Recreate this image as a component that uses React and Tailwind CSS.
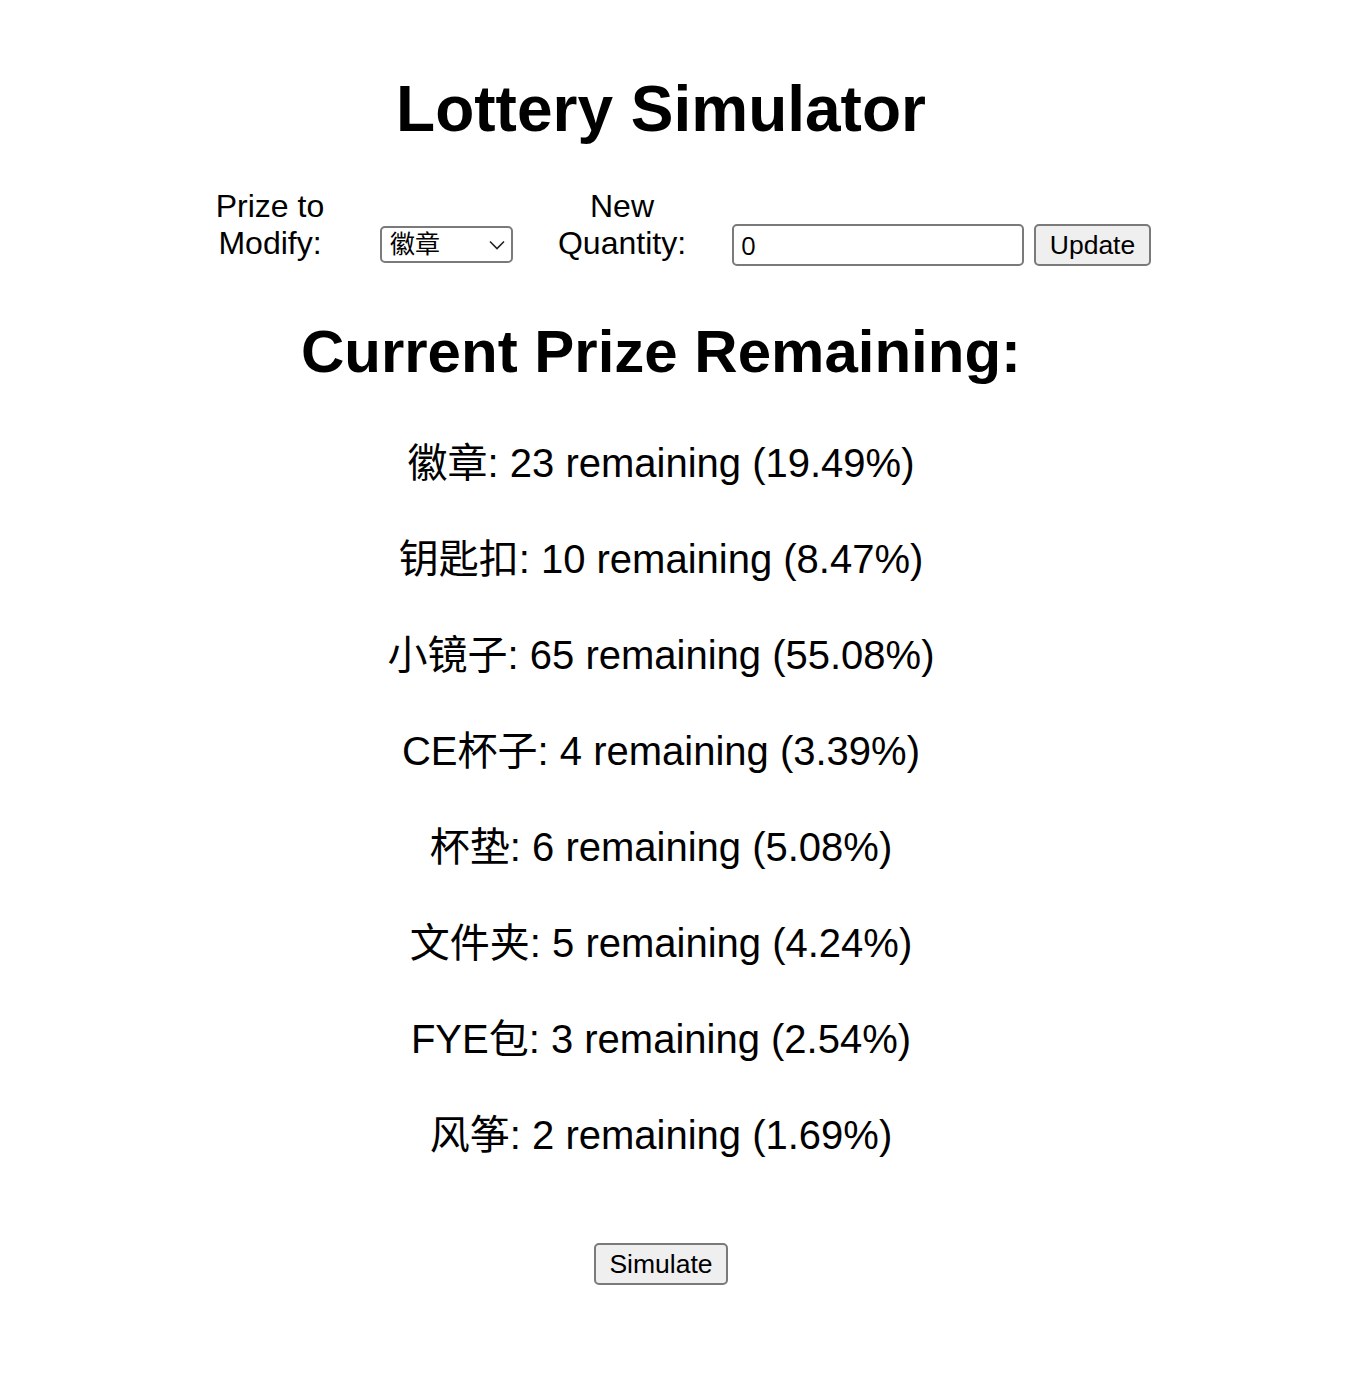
import React, { useState } from "react";

const prizes = [
  ["徽章", 23, "19.49"],
  ["钥匙扣", 10, "8.47"],
  ["小镜子", 65, "55.08"],
  ["CE杯子", 4, "3.39"],
  ["杯垫", 6, "5.08"],
  ["文件夹", 5, "4.24"],
  ["FYE包", 3, "2.54"],
  ["风筝", 2, "1.69"],
];

const font = "font-['Liberation_Sans','Noto_Sans_CJK_SC',sans-serif]";

export default function App() {
  const [sel, setSel] = useState("徽章");
  const [qty, setQty] = useState("0");
  return (
    <div className={`${font} text-black bg-white min-h-[1380px] w-[1362px]`}>
      <div className="w-[1290px] ml-[16px] flex flex-col items-center">
        <h1 className="mt-[72px] text-[64px] leading-[74px] font-bold">Lottery Simulator</h1>
      </div>

      <div className="mt-[42px] pl-[200px] flex items-start">
        <label className="w-[140px] text-center text-[32px] leading-[37px]">
          Prize to
          <br />
          Modify:
        </label>
        <div className="relative ml-[40px] mt-[38px]">
          <select
            value={sel}
            onChange={(e) => setSel(e.target.value)}
            className={`${font} appearance-none w-[133px] h-[37px] border-2 border-[#7a7a7a] rounded-[5px] bg-white pl-[8px] text-[25px] leading-[33px]`}
          >
            {prizes.map((p) => (
              <option key={p[0]} value={p[0]}>
                {p[0]}
              </option>
            ))}
          </select>
          <svg
            className="pointer-events-none absolute right-[8px] top-[14px]"
            width="16"
            height="10"
            viewBox="0 0 16 10"
            fill="none"
            stroke="#222"
            strokeWidth="1.6"
          >
            <path d="M1 1.5 L8 8.5 L15 1.5" />
          </svg>
        </div>
        <label className="ml-[39px] w-[140px] text-center text-[32px] leading-[37px]">
          New
          <br />
          Quantity:
        </label>
        <input
          value={qty}
          onChange={(e) => setQty(e.target.value)}
          className="ml-[40px] mt-[36px] w-[292px] h-[42px] border-2 border-[#7a7a7a] rounded-[5px] bg-white pl-[7px] text-[26px] font-['Open_Sans',sans-serif] outline-none"
        />
        <button className="ml-[10px] mt-[36px] w-[117px] h-[42px] border-2 border-[#7a7a7a] rounded-[5px] bg-[#efefef] text-[26.5px] leading-[38px]">
          Update
        </button>
      </div>

      <div className="w-[1290px] ml-[16px] flex flex-col items-center">
        <h2 className="mt-[51px] text-[60px] leading-[69px] font-bold">Current Prize Remaining:</h2>
        <div className="mt-[49px] flex flex-col items-center gap-[40px]">
          {prizes.map((p) => (
            <p key={p[0]} className="text-[40px] leading-[56px] whitespace-nowrap">
              {p[0]}: {p[1]} remaining ({p[2]}%)
            </p>
          ))}
        </div>
        <button className="mt-[80px] w-[134px] h-[42px] border-2 border-[#7a7a7a] rounded-[5px] bg-[#efefef] text-[26.5px] leading-[38px]">
          Simulate
        </button>
      </div>
    </div>
  );
}
